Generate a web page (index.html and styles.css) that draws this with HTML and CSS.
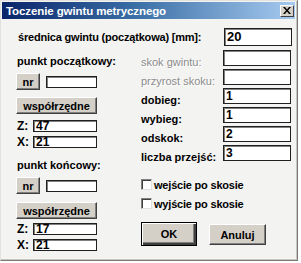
FILE: index.html
```html
<!DOCTYPE html>
<html>
<head>
<meta charset="utf-8">
<link rel="stylesheet" href="styles.css">
</head>
<body>
<div class="window">
  <div class="titlebar">
    <span class="title">Toczenie gwintu metrycznego</span>
    <span class="close"><svg width="8" height="7" viewBox="0 0 8 7"><path d="M0 0h2l2 2.5L6 0h2L5 3.5 8 7H6L4 4.5 2 7H0l3-3.5z" fill="#000"/></svg></span>
  </div>
  <div class="content">
    <div class="top-row">
      <span class="top-label">średnica gwintu (początkowa) [mm]:</span>
      <div class="field field-top">20</div>
    </div>
    <div class="cols">
      <div class="left">
        <div class="group-title">punkt początkowy:</div>
        <div class="nr-row"><div class="btn btn-nr">nr</div><div class="field field-nr"></div></div>
        <div class="btn btn-coords">współrzędne</div>
        <div class="coord-row first"><span class="axis">Z:</span><div class="field field-coord">47</div></div>
        <div class="coord-row"><span class="axis">X:</span><div class="field field-coord">21</div></div>
        <div class="group-title second">punkt końcowy:</div>
        <div class="nr-row"><div class="btn btn-nr">nr</div><div class="field field-nr"></div></div>
        <div class="btn btn-coords later">współrzędne</div>
        <div class="coord-row"><span class="axis">Z:</span><div class="field field-coord">17</div></div>
        <div class="coord-row"><span class="axis">X:</span><div class="field field-coord">21</div></div>
      </div>
      <div class="right">
        <div class="frow"><span class="flabel disabled">skok gwintu:</span><div class="field field-r"></div></div>
        <div class="frow"><span class="flabel disabled">przyrost skoku:</span><div class="field field-r"></div></div>
        <div class="frow"><span class="flabel">dobieg:</span><div class="field field-r">1</div></div>
        <div class="frow"><span class="flabel">wybieg:</span><div class="field field-r">1</div></div>
        <div class="frow"><span class="flabel">odskok:</span><div class="field field-r">2</div></div>
        <div class="frow"><span class="flabel">liczba przejść:</span><div class="field field-r">3</div></div>
        <div class="check-row first"><span class="checkbox"></span><span class="check-label">wejście po skosie</span></div>
        <div class="check-row"><span class="checkbox"></span><span class="check-label">wyjście po skosie</span></div>
        <div class="buttons">
          <div class="btn btn-ok">OK</div>
          <div class="btn btn-cancel">Anuluj</div>
        </div>
      </div>
    </div>
  </div>
</div>
</body>
</html>
```

FILE: styles.css
```css
html, body {
  margin: 0;
  padding: 0;
  background: #ffffff;
}
body {
  font-family: "Liberation Sans", Arial, sans-serif;
  font-weight: bold;
  font-size: 11px;
  color: #000;
}
.window {
  box-sizing: border-box;
  width: 298px;
  height: 261px;
  background: #f3f3f2;
  border: 1px solid #e4e2dd;
  border-right-color: #7a7a7a;
  border-bottom-color: #7a7a7a;
  box-shadow: inset -1px -1px 0 #c8c6c0;
  padding: 1px 2px 0 1px;
}
.titlebar {
  height: 17px;
  display: flex;
  align-items: center;
  justify-content: space-between;
  background: linear-gradient(to right, #0a246a 0%, #3a6ea5 45%, #a6caf0 100%);
  padding: 0 0 0 4px;
}
.title {
  color: #fff;
  font-size: 11.5px;
  font-weight: bold;
  letter-spacing: -0.1px;
}
.close {
  width: 14px;
  height: 12px;
  box-sizing: border-box;
  background: #d4d0c8;
  border: 1px solid;
  border-color: #fff #404040 #404040 #fff;
  display: flex;
  align-items: center;
  justify-content: center;
  margin-right: 1px;
}
.content {
  padding-left: 14px;
}
.top-row {
  display: flex;
  align-items: center;
  margin-top: 9px;
}
.top-label {
  width: 206px;
  padding-left: 2px;
  letter-spacing: -0.2px;
}
.field {
  box-sizing: border-box;
  background: #fff;
  border: 1px solid #202020;
  box-shadow: inset 1px 1px 0 #808080;
  padding-left: 2px;
  font-size: 12px;
  line-height: 12px;
  display: flex;
  align-items: center;
}
.field-top {
  width: 68px;
  height: 18px;
  font-size: 13px;
}
.cols {
  display: flex;
  margin-top: 4px;
}
.left {
  width: 81px;
  display: flex;
  flex-direction: column;
}
.group-title {
  height: 23px;
  line-height: 23px;
  padding-left: 1px;
  white-space: nowrap;
}
.group-title.second {
  margin-top: 5px;
  height: 24px;
  line-height: 24px;
}
.nr-row {
  display: flex;
  align-items: center;
  height: 17px;
}
.btn {
  box-sizing: border-box;
  background: #d4d0c8;
  border: 1px solid;
  border-color: #ffffff #404040 #404040 #ffffff;
  box-shadow: inset -1px -1px 0 #808080;
  display: flex;
  align-items: center;
  justify-content: center;
  font-size: 11px;
}
.btn-nr {
  width: 24px;
  height: 17px;
}
.field-nr {
  width: 51px;
  height: 12px;
  margin-left: 6px;
}
.btn-coords {
  width: 81px;
  height: 17px;
  margin-top: 7px;
}
.btn-coords.later {
  margin-top: 8px;
}
.coord-row {
  display: flex;
  align-items: center;
  margin-top: 4px;
  height: 12px;
}
.coord-row.first {
  margin-top: 6px;
}
.axis {
  width: 17px;
  padding-left: 1px;
  box-sizing: border-box;
  font-size: 12px;
}
.field-coord {
  width: 64px;
  height: 12px;
}
.right {
  margin-left: 44px;
  display: flex;
  flex-direction: column;
}
.frow {
  display: flex;
  height: 16px;
  margin-bottom: 3px;
}
.flabel {
  width: 82px;
  align-self: flex-end;
  line-height: 13px;
  margin-bottom: -3px;
  white-space: nowrap;
}
.flabel.disabled {
  color: #8c8c8c;
  font-weight: normal;
  text-shadow: 1px 1px 0 #ffffff;
}
.field-r {
  width: 68px;
  height: 16px;
}
.check-row {
  display: flex;
  align-items: center;
  height: 11px;
  margin-top: 8px;
}
.check-row.first {
  margin-top: 15px;
}
.checkbox {
  box-sizing: border-box;
  width: 11px;
  height: 11px;
  background: #fff;
  border: 1px solid;
  border-color: #808080 #e0e0e0 #e0e0e0 #808080;
  box-shadow: inset 1px 1px 0 #404040;
}
.check-label {
  margin-left: 2px;
  font-size: 11px;
  letter-spacing: -0.2px;
}
.buttons {
  display: flex;
  align-items: flex-start;
  margin-top: 13px;
}
.btn-ok {
  width: 56px;
  height: 24px;
  border: 1px solid #000;
  box-shadow: inset 1px 1px 0 #fff, inset -2px -2px 0 #404040, inset -3px -3px 0 #808080;
}
.btn-cancel {
  width: 57px;
  height: 21px;
  margin-left: 12px;
  margin-top: 2px;
}
```
